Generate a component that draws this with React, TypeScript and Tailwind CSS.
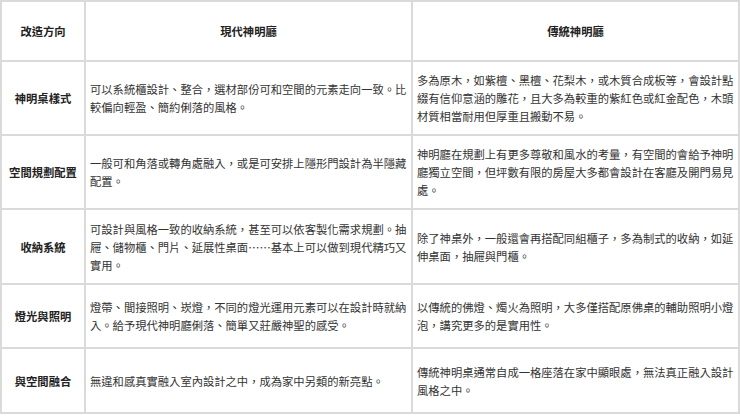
const rows = [
  {
    label: '神明桌樣式',
    modern: '可以系統櫃設計、整合，選材部份可和空間的元素走向一致。比較偏向輕盈、簡約俐落的風格。',
    classic: '多為原木，如紫檀、黑檀、花梨木，或木質合成板等，會設計點綴有信仰意涵的雕花，且大多為較重的紫紅色或紅金配色，木頭材質相當耐用但厚重且搬動不易。',
    h: 'h-[74px]',
  },
  {
    label: '空間規劃配置',
    modern: '一般可和角落或轉角處融入，或是可安排上隱形門設計為半隱藏配置。',
    classic: '神明廳在規劃上有更多尊敬和風水的考量，有空間的會給予神明廳獨立空間，但坪數有限的房屋大多都會設計在客廳及開門易見處。',
    h: 'h-[74px]',
  },
  {
    label: '收納系統',
    modern: '可設計與風格一致的收納系統，甚至可以依客製化需求規劃。抽屜、儲物櫃、門片、延展性桌面……基本上可以做到現代精巧又實用。',
    classic: '除了神桌外，一般還會再搭配同組櫃子，多為制式的收納，如延伸桌面，抽屜與門櫃。',
    h: 'h-[75px]',
  },
  {
    label: '燈光與照明',
    modern: '燈帶、間接照明、崁燈，不同的燈光運用元素可以在設計時就納入。給予現代神明廳俐落、簡單又莊嚴神聖的感受。',
    classic: '以傳統的佛燈、燭火為照明，大多僅搭配原佛桌的輔助照明小燈泡，講究更多的是實用性。',
    h: 'h-[64px]',
  },
  {
    label: '與空間融合',
    modern: '無違和感真實融入室內設計之中，成為家中另類的新亮點。',
    classic: '傳統神明桌通常自成一格座落在家中顯眼處，無法真正融入設計風格之中。',
    h: 'h-[65px]',
  },
]

const cell = 'border-r-2 border-b-2 border-[#dadada] flex items-center'

export default function App() {
  return (
    <div
      className="w-[740px] h-[416px] bg-white text-[11.3px] leading-[18px] text-[#333]"
      style={{ fontFamily: '"Noto Sans CJK TC", "Noto Sans", sans-serif' }}
    >
      <div className="grid grid-cols-[84px_327px_327px] border-l-2 border-t-2 border-[#dadada]">
        {/* header */}
        <div className={`${cell} h-[60px] justify-center font-bold text-[#222]`}>改造方向</div>
        <div className={`${cell} h-[60px] justify-center font-bold text-[#222]`}>現代神明廳</div>
        <div className={`${cell} h-[60px] justify-center font-bold text-[#222]`}>傳統神明廳</div>

        {rows.map((r) => (
          <div key={r.label} className="contents">
            <div className={`${cell} ${r.h} justify-center font-bold text-[#222]`}>{r.label}</div>
            <div className={`${cell} ${r.h} pl-[4px] pr-[2px]`}>
              <p>{r.modern}</p>
            </div>
            <div className={`${cell} ${r.h} pl-[4px] pr-[2px]`}>
              <p>{r.classic}</p>
            </div>
          </div>
        ))}
      </div>
    </div>
  )
}
